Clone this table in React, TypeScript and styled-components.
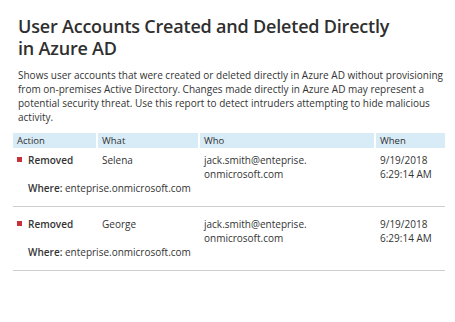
import React from "react";
import styled, { createGlobalStyle } from "styled-components";

const GlobalStyle = createGlobalStyle`
  html, body {
    margin: 0;
    padding: 0;
    background: #ffffff;
  }
  body {
    font-family: "Open Sans", "Noto Sans", sans-serif;
    color: #333333;
  }
`;

const Page = styled.div`
  width: 455px;
  height: 322px;
  box-sizing: border-box;
  padding: 15px 10px 0 13px;
  background: #fff;
`;

const Title = styled.h1`
  margin: 0 0 0 5px;
  font-size: 18px;
  line-height: 22px;
  font-weight: 600;
  letter-spacing: -0.2px;
  color: #2f2f2f;
  width: 380px;
`;

const Description = styled.p`
  margin: 9px 0 9px 5px;
  font-size: 10px;
  line-height: 14px;
  color: #333;
`;

const Table = styled.div`
  width: 432px;
`;

const HeaderRow = styled.div`
  display: grid;
  grid-template-columns: 83px 100px 174px 1fr;
  column-gap: 2px;
`;

const HeaderCell = styled.div`
  background: #d8ecf8;
  font-size: 9.5px;
  font-weight: 400;
  line-height: 15px;
  padding-left: 4px;
  color: #2f2f2f;
`;

const Record = styled.div`
  padding: 10px 0 11px;
  border-bottom: 1px solid #cfcfcf;

  ${HeaderRow} + & {
    padding-top: 5px;
  }
`;

const DataRow = styled.div`
  display: grid;
  grid-template-columns: 83px 100px 174px 1fr;
  column-gap: 2px;
  font-size: 10px;
  line-height: 14px;
`;

const Cell = styled.div<{ $bold?: boolean }>`
  padding-left: 4px;
  font-weight: ${(p) => (p.$bold ? 600 : 400)};
  display: flex;
  align-items: flex-start;
`;

const Marker = styled.span`
  width: 5px;
  height: 5px;
  background: #c8303a;
  margin: 4px 6px 0 0;
  flex-shrink: 0;
`;

const Where = styled.div`
  font-size: 10px;
  line-height: 14px;
  padding-left: 15px;
`;

const WhereLabel = styled.span`
  font-weight: 600;
`;

const records = [{ what: "Selena" }, { what: "George" }];

const App = () => {
  return (
    <Page>
      <GlobalStyle />
      <Title>User Accounts Created and Deleted Directly in Azure AD</Title>
      <Description>
        Shows user accounts that were created or deleted directly in Azure AD
        without provisioning from on-premises Active Directory. Changes made
        directly in Azure AD may represent a potential security threat. Use
        this report to detect intruders attempting to hide malicious activity.
      </Description>
      <Table>
        <HeaderRow>
          <HeaderCell>Action</HeaderCell>
          <HeaderCell>What</HeaderCell>
          <HeaderCell>Who</HeaderCell>
          <HeaderCell>When</HeaderCell>
        </HeaderRow>
        {records.map((r) => (
          <Record key={r.what}>
            <DataRow>
              <Cell $bold>
                <Marker />
                Removed
              </Cell>
              <Cell>{r.what}</Cell>
              <Cell>
                jack.smith@enteprise.
                <br />
                onmicrosoft.com
              </Cell>
              <Cell>
                9/19/2018
                <br />
                6:29:14 AM
              </Cell>
            </DataRow>
            <Where>
              <WhereLabel>Where:</WhereLabel> enteprise.onmicrosoft.com
            </Where>
          </Record>
        ))}
      </Table>
    </Page>
  );
};

export default App;
